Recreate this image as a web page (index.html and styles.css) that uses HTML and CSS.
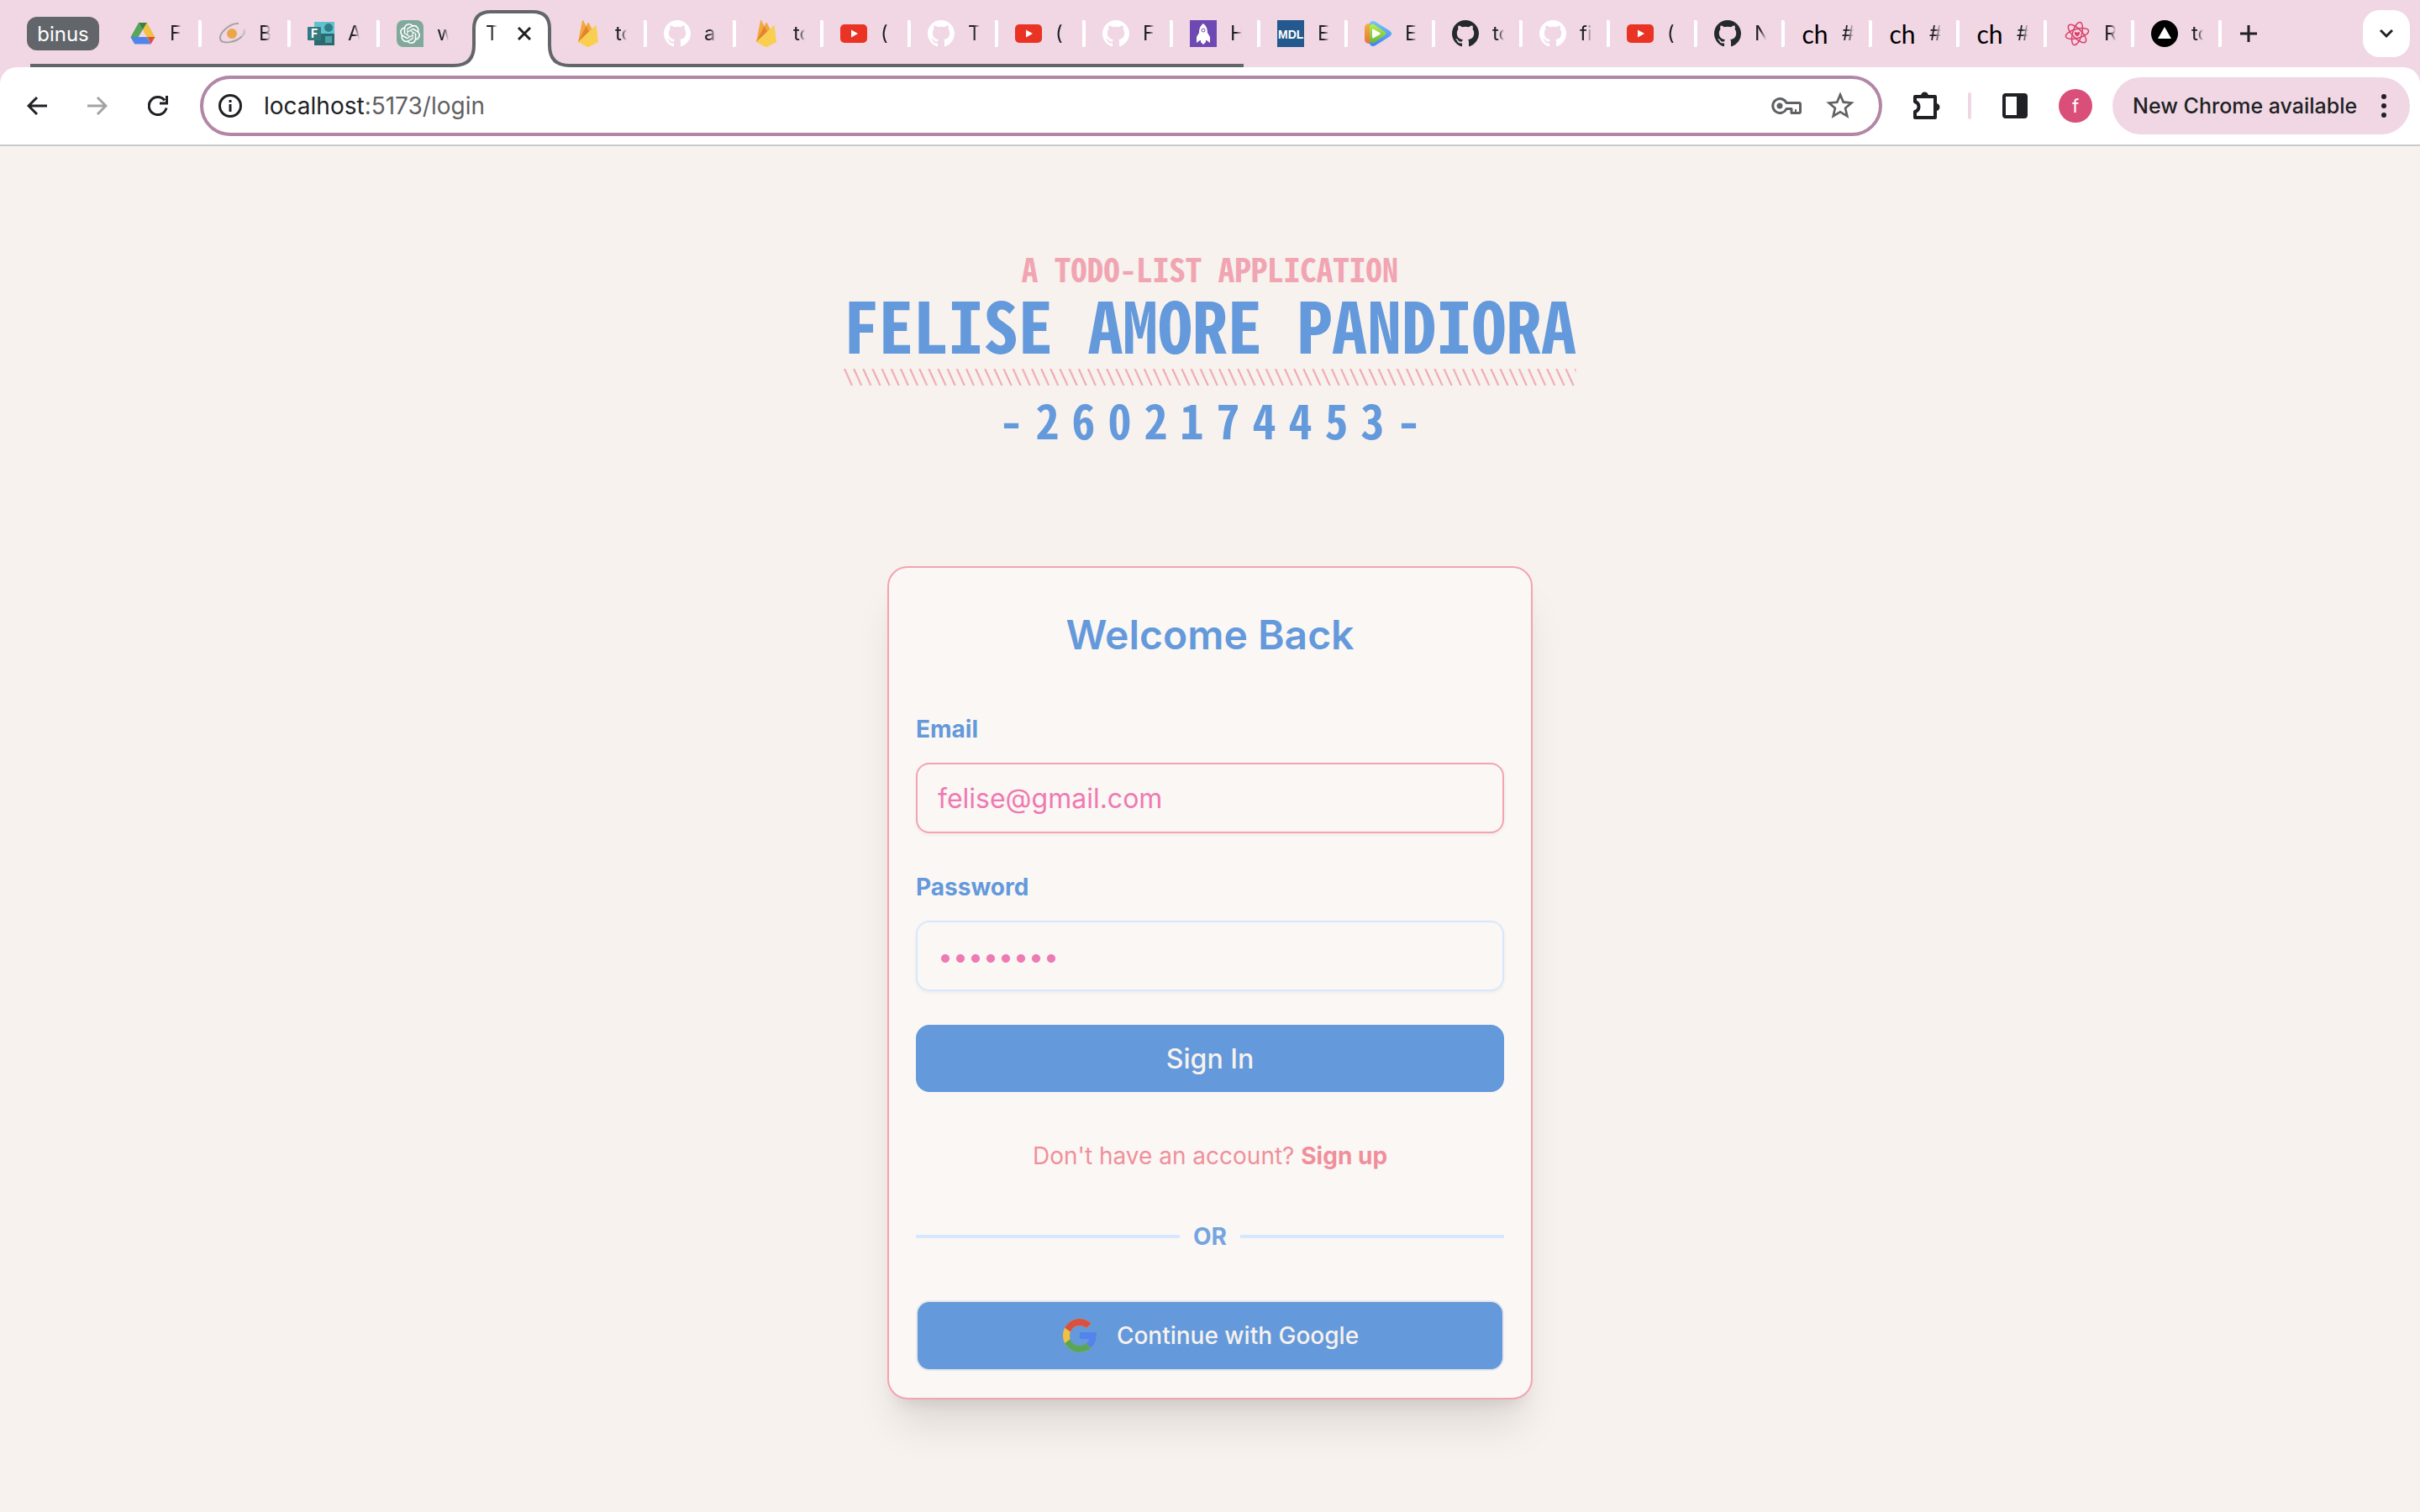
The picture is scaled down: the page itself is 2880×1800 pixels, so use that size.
FILE: index.html
```html
<!DOCTYPE html>
<html lang="en">
<head>
<meta charset="utf-8">
<title>Todo List – Login</title>
<link rel="stylesheet" href="styles.css">
</head>
<body>
<svg class="sprite" aria-hidden="true">
  <symbol id="github" viewBox="0 0 16 16"><path fill="currentColor" d="M8 0C3.58 0 0 3.58 0 8c0 3.54 2.29 6.53 5.47 7.59.4.07.55-.17.55-.38 0-.19-.01-.82-.01-1.49-2.01.37-2.53-.49-2.69-.94-.09-.23-.48-.94-.82-1.13-.28-.15-.68-.52-.01-.53.63-.01 1.08.58 1.23.82.72 1.21 1.87.87 2.33.66.07-.52.28-.87.51-1.07-1.78-.2-3.64-.89-3.64-3.95 0-.87.31-1.59.82-2.15-.08-.2-.36-1.02.08-2.12 0 0 .67-.21 2.2.82.64-.18 1.32-.27 2-.27s1.36.09 2 .27c1.53-1.04 2.2-.82 2.2-.82.44 1.1.16 1.92.08 2.12.51.56.82 1.27.82 2.15 0 3.07-1.87 3.75-3.65 3.95.29.25.54.73.54 1.48 0 1.07-.01 1.93-.01 2.2 0 .21.15.46.55.38A8.01 8.01 0 0 0 16 8c0-4.42-3.58-8-8-8z"/></symbol>
  <symbol id="youtube" viewBox="0 0 32 32"><rect x="0" y="5" width="32" height="22" rx="5" fill="#ea3323"/><path fill="#fff" d="M13 11.500v9l8-4.500z"/></symbol>
  <symbol id="firebase" viewBox="0 0 32 32"><path fill="#f2a83b" d="M4 26 9 .6c.2-.7.8-.7 1.100-.1L13.600 7l2-3.700c.3-.5.9-.5 1.200 0L28 26z"/><path fill="#e28433" d="M4 26 13.600 7l4 7.500z"/><path fill="#f8cf50" d="M4 26 24.500 6.500c.5-.4 1.100-.2 1.200.4L28 26l-11 6c-.7.3-1.300.3-2 0z"/></symbol>
  <symbol id="drive" viewBox="0 0 32 32"><path fill="#58a55c" d="M11 3 1.500 20 6 28l10-17z"/><path fill="#3b8043" d="M11 3h10l-5 8.500z"/><path fill="#f2c042" d="M21 3l9.500 17H20.500L16 11.500z"/><path fill="#5084ec" d="M1.500 20H20.500l5 8.500H6.500z"/><path fill="#d9503f" d="M21 20h9.500l-5 8.500z"/></symbol>
</svg>

<header class="browser">
  <nav class="tabs" aria-label="Tabs">
    <div class="group">
      <button class="chip">binus</button>
      <button class="tab wide"><svg class="fav"><use href="#drive"/></svg><span class="label">F</span></button>
      <button class="tab wide"><svg class="fav" viewBox="0 0 32 32"><g fill="none" stroke="#a5a3a5" stroke-width="2"><path d="M24 4C14 3 1 15 2 22c1 8 20 4 26-3"/><path stroke="#c9c2c6" stroke-width="3" d="M28 19c3-3 4-5 3-8"/></g><circle cx="16" cy="16" r="6" fill="#eca64a"/></svg><span class="label">B</span></button>
      <button class="tab wide"><svg class="fav" viewBox="0 0 32 32"><path fill="#5fc1cc" d="M8 2h24v14H8z"/><path fill="#296a70" d="M8 16h24v14H8z"/><circle cx="25" cy="9" r="5" fill="#2f7e87"/><path fill="#4f9fa6" d="M21 19h8v8h-8z"/><rect y="8" width="16" height="16" rx="1" fill="#35797f"/><text x="4" y="21" class="fav-letter">F</text></svg><span class="label">A</span></button>
      <button class="tab wide"><svg class="fav" viewBox="0 0 32 32"><path fill="#80a99c" d="M8 0h16a8 8 0 0 1 8 8v24H8a8 8 0 0 1-8-8V8a8 8 0 0 1 8-8z"/><path fill="#fff" transform="translate(4 4)" d="M22.2819 9.8211a5.9847 5.9847 0 0 0-.5157-4.9108 6.0462 6.0462 0 0 0-6.5098-2.9A6.0651 6.0651 0 0 0 4.9807 4.1818a5.9847 5.9847 0 0 0-3.9977 2.9 6.0462 6.0462 0 0 0 .7427 7.0966 5.98 5.98 0 0 0 .511 4.9107 6.051 6.051 0 0 0 6.5146 2.9001A5.9847 5.9847 0 0 0 13.2599 24a6.0557 6.0557 0 0 0 5.7718-4.2058 5.9894 5.9894 0 0 0 3.9977-2.9001 6.0557 6.0557 0 0 0-.7475-7.0729zm-9.022 12.6081a4.4755 4.4755 0 0 1-2.8764-1.0408l.1419-.0804 4.7783-2.7582a.7948.7948 0 0 0 .3927-.6813v-6.7369l2.02 1.1686a.071.071 0 0 1 .038.052v5.5826a4.504 4.504 0 0 1-4.4945 4.4944zm-9.6607-4.1254a4.4708 4.4708 0 0 1-.5346-3.0137l.142.0852 4.783 2.7582a.7712.7712 0 0 0 .7806 0l5.8428-3.3685v2.3324a.0804.0804 0 0 1-.0332.0615L9.74 19.9502a4.4992 4.4992 0 0 1-6.1408-1.6464zM2.3408 7.8956a4.485 4.485 0 0 1 2.3655-1.9728V11.6a.7664.7664 0 0 0 .3879.6765l5.8144 3.3543-2.0201 1.1685a.0757.0757 0 0 1-.071 0l-4.8303-2.7865A4.504 4.504 0 0 1 2.3408 7.872zm16.5963 3.8558L13.1038 8.364 15.1192 7.2a.0757.0757 0 0 1 .071 0l4.8303 2.7913a4.4944 4.4944 0 0 1-.6765 8.1042v-5.6772a.79.79 0 0 0-.407-.667zm2.0107-3.0231l-.142-.0852-4.7735-2.7818a.7759.7759 0 0 0-.7854 0L9.409 9.2297V6.8974a.0662.0662 0 0 1 .0284-.0615l4.8303-2.7866a4.4992 4.4992 0 0 1 6.6802 4.66zM8.3065 12.863l-2.02-1.1638a.0804.0804 0 0 1-.038-.0567V6.0742a4.4992 4.4992 0 0 1 7.3757-3.4537l-.142.0805L8.704 5.459a.7948.7948 0 0 0-.3927.6813zm1.0976-2.3654l2.602-1.4998 2.6069 1.4998v2.9994l-2.5974 1.4997-2.6067-1.4997Z"/></svg><span class="label">w</span></button>
      <div class="tab wide active">
        <svg class="shape" viewBox="0 0 138 68" aria-hidden="true"><path fill="#fff" d="M0 66Q24 66 24 42V22Q24 2 44 2H94Q114 2 114 22V42Q114 66 138 66V68H0z"/><path fill="none" stroke="#62666a" stroke-width="4" d="M0 66Q24 66 24 42V22Q24 2 44 2H94Q114 2 114 22V42Q114 66 138 66"/></svg>
        <span class="label">T</span>
        <button class="close" aria-label="Close tab"><svg viewBox="0 0 16 16"><path fill="none" stroke="#202124" stroke-width="3" d="M1 1l14 14M15 1 1 15"/></svg></button>
      </div>
      <button class="tab wide"><svg class="fav"><use href="#firebase"/></svg><span class="label">to</span></button>
      <button class="tab wide"><svg class="fav light"><use href="#github"/></svg><span class="label">a</span></button>
      <button class="tab"><svg class="fav"><use href="#firebase"/></svg><span class="label">to</span></button>
      <button class="tab"><svg class="fav"><use href="#youtube"/></svg><span class="label">(</span></button>
      <button class="tab"><svg class="fav light"><use href="#github"/></svg><span class="label">T</span></button>
      <button class="tab"><svg class="fav"><use href="#youtube"/></svg><span class="label">(</span></button>
      <button class="tab"><svg class="fav light"><use href="#github"/></svg><span class="label">F</span></button>
      <button class="tab"><svg class="fav" viewBox="0 0 32 32"><path fill="#6f49b3" d="M0 0h32v32H0z"/><path fill="#fff" d="M16 4c-4 3-5 7-5 11l-3 5v7l4-3h8l4 3v-7l-3-5c0-4-1-8-5-11zM13 24h6v2l-3 3-3-3z"/><circle cx="16" cy="12" r="2" fill="#fff" stroke="#6f49b3" stroke-width="1"/></svg><span class="label">H</span></button>
    </div>
    <button class="tab"><svg class="fav" viewBox="0 0 32 32"><path fill="#23598f" d="M0 0h32v32H0z"/><text x="1" y="22" class="fav-mdl">MDL</text></svg><span class="label">E</span></button>
    <button class="tab"><svg class="fav" viewBox="0 0 32 32"><defs><linearGradient id="b" x2="0" y2="1"><stop stop-color="#76c4f9"/><stop offset="1" stop-color="#3f82f3"/></linearGradient><linearGradient id="g" x2="0" y2="1"><stop stop-color="#b9f04c"/><stop offset="1" stop-color="#6cb33a"/></linearGradient><linearGradient id="o" x2="0" y2="1"><stop stop-color="#f0b53f"/><stop offset="1" stop-color="#e8743b"/></linearGradient></defs><rect y="4" width="10" height="24" rx="5" fill="url(#o)"/><path fill="url(#b)" d="M6 4c1-3 4-4 7-2l16 10c4 3 4 5 0 8L13 30c-3 2-6 1-7-2z"/><path fill="url(#g)" d="M6 7c1-2 3-3 5-2l12 8c3 2 3 4 0 6l-12 8c-2 1-4 0-5-2z"/><path fill="#fff" d="M9 12c0-1 1-2 2-1l7 4c1 1 1 1 0 2l-7 4c-1 1-2 0-2-1z"/></svg><span class="label">E</span></button>
    <button class="tab"><svg class="fav dark"><use href="#github"/></svg><span class="label">to</span></button>
    <button class="tab"><svg class="fav light"><use href="#github"/></svg><span class="label">fi</span></button>
    <button class="tab"><svg class="fav"><use href="#youtube"/></svg><span class="label">(</span></button>
    <button class="tab"><svg class="fav dark"><use href="#github"/></svg><span class="label">N</span></button>
    <button class="tab"><span class="fav ch">ch</span><span class="label">#</span></button>
    <button class="tab"><span class="fav ch">ch</span><span class="label">#</span></button>
    <button class="tab"><span class="fav ch">ch</span><span class="label">#</span></button>
    <button class="tab"><svg class="fav" viewBox="0 0 32 32"><g fill="none" stroke="#de3f6b" stroke-width="1.500"><ellipse cx="16" cy="16" rx="14" ry="5.500" transform="rotate(-15 16 16)"/><ellipse cx="16" cy="16" rx="14" ry="5.500" transform="rotate(45 16 16)"/><ellipse cx="16" cy="16" rx="14" ry="5.500" transform="rotate(105 16 16)"/></g><path fill="#de3f6b" d="M16 19.500c-5-3-3-6-1.500-5.500l1.500 1 1.500-1c1.500-.5 3.500 2.500-1.500 5.500z"/></svg><span class="label">R</span></button>
    <button class="tab"><svg class="fav" viewBox="0 0 32 32"><circle cx="16" cy="16" r="16"/><path fill="#fff" d="M16 8l8 14H8z"/></svg><span class="label">to</span></button>
    <button class="new-tab" aria-label="New tab"><svg viewBox="0 0 20 20"><path fill="none" stroke="#202124" stroke-width="3" d="M10 0v20M0 10h20"/></svg></button>
    <button class="tab-search" aria-label="Search tabs"><svg viewBox="0 0 16 16"><path fill="none" stroke="#202124" stroke-width="3" d="M1 4l7 7 7-7"/></svg></button>
  </nav>

  <div class="toolbar">
    <button class="tool" aria-label="Back"><svg viewBox="0 0 24 24"><path fill="none" stroke="#202124" stroke-width="3" d="M24 12H3M12 2 2 12l10 10"/></svg></button>
    <button class="tool" aria-label="Forward"><svg viewBox="0 0 24 24"><path fill="none" stroke="#a3a3a4" stroke-width="3" d="M0 12h21M12 2l10 10-10 10"/></svg></button>
    <button class="tool" aria-label="Reload"><svg viewBox="0 0 24 24"><path fill="none" stroke="#202124" stroke-width="3" d="M22 14.500A10.500 10.500 0 1 1 20 5.500"/><path fill="none" stroke="#202124" stroke-width="3" d="M22.500 0v9H14"/></svg></button>
    <form class="omnibox">
      <svg class="info" viewBox="0 0 28 28" aria-hidden="true"><circle cx="14" cy="14" r="12.500" fill="none" stroke="#202124" stroke-width="3"/><path fill="#202124" d="M12.500 12h3v9h-3zM12.500 7h3v3h-3z"/></svg>
      <a class="url" href="#"><b>localhost</b>:5173/login</a>
      <svg class="key" viewBox="0 0 36 20" aria-hidden="true"><path fill="none" stroke="#5f6163" stroke-width="3" stroke-linejoin="round" d="M18 6.500h15a1.500 1.500 0 0 1 1.500 1.500v9a1.500 1.500 0 0 1-1.500 1.500h-9V13.500H18a8.500 8.500 0 1 1 0-7z"/><circle cx="10" cy="10" r="3.500" fill="#5f6163"/><path fill="#5f6163" d="M28 14h2v4h-2z"/></svg>
      <svg class="star" viewBox="0 0 24 24" aria-hidden="true"><path fill="#5f6163" d="M22 9.240l-7.190-.62L12 2 9.190 8.630 2 9.240l5.460 4.730L5.820 21 12 17.270 18.180 21l-1.630-7.030L22 9.240zM12 15.400l-3.760 2.270 1-4.280-3.320-2.880 4.380-.38L12 6.100l1.710 4.040 4.380.38-3.320 2.880 1 4.280L12 15.400z"/></svg>
    </form>
    <button class="tool ext" aria-label="Extensions"><svg viewBox="0 0 34 34"><path fill="none" stroke="#202124" stroke-width="4" stroke-linejoin="round" d="M3 6h24v25H3v-7c6-2 6-10 0-12z"/><path fill="#202124" d="M10 5a4.500 4.500 0 0 1 9 0zM28 14a4.500 4.500 0 0 1 0 9z"/></svg></button>
    <span class="divider"></span>
    <button class="tool panel" aria-label="Side panel"><svg viewBox="0 0 30 30"><rect x="2" y="2" width="26" height="26" rx="2" fill="#fff" stroke="#202124" stroke-width="4"/><path fill="#202124" d="M17 2h11v26H17z"/></svg></button>
    <button class="avatar">f</button>
    <button class="update">New Chrome available<svg viewBox="0 0 6 30" aria-hidden="true"><g fill="#202124"><circle cx="3" cy="4" r="3"/><circle cx="3" cy="15" r="3"/><circle cx="3" cy="26" r="3"/></g></svg></button>
  </div>
</header>

<main class="page">
  <div class="banner">
    <p class="kicker">A TODO-LIST APPLICATION</p>
    <h1 class="name">FELISE AMORE PANDIORA</h1>
    <svg class="hatch" aria-hidden="true"><defs><pattern id="slash" width="11.150" height="20" patternUnits="userSpaceOnUse"><path stroke="#f1a4b2" stroke-width="2" d="M1 0l9 20"/></pattern></defs><rect width="100%" height="20" fill="url(#slash)"/></svg>
    <p class="number">-2602174453-</p>
  </div>

  <section class="card">
    <h2 class="heading">Welcome Back</h2>
    <form class="form">
      <label class="field-label" for="email">Email</label>
      <input class="field focused" id="email" type="email" value="felise@gmail.com">
      <label class="field-label" for="password">Password</label>
      <input class="field" id="password" type="password" value="password">
      <button class="submit" type="button">Sign In</button>
    </form>
    <p class="signup">Don't have an account? <a href="#">Sign up</a></p>
    <div class="or">OR</div>
    <button class="google"><svg viewBox="2 2 44 44" aria-hidden="true"><path fill="#f0c043" d="M43.611 20.083H42V20H24v8h11.303c-1.649 4.657-6.080 8-11.303 8-6.627 0-12-5.373-12-12s5.373-12 12-12c3.059 0 5.842 1.154 7.961 3.039l5.657-5.657C34.046 6.053 29.268 4 24 4 12.955 4 4 12.955 4 24s8.955 20 20 20 20-8.955 20-20c0-1.341-.138-2.650-.389-3.917z"/><path fill="#d95140" d="M6.306 14.691l6.571 4.819C14.655 15.108 18.961 12 24 12c3.059 0 5.842 1.154 7.961 3.039l5.657-5.657C34.046 6.053 29.268 4 24 4 16.318 4 9.656 8.337 6.306 14.691z"/><path fill="#58a55c" d="M24 44c5.166 0 9.860-1.977 13.409-5.192l-6.190-5.238A11.910 11.910 0 0 1 24 36c-5.202 0-9.619-3.317-11.283-7.946l-6.522 5.025C9.505 39.556 16.227 44 24 44z"/><path fill="#5383ec" d="M43.611 20.083H42V20H24v8h11.303a12.040 12.040 0 0 1-4.087 5.571l6.193 5.238C36.971 39.205 44 34 44 24c0-1.341-.138-2.650-.389-3.917z"/></svg>Continue with Google</button>
  </section>
</main>
</body>
</html>
```
FILE: styles.css
```css
* { box-sizing: border-box; }
body {
  margin: 0;
  min-height: 100vh;
  background: #f7f2ee;
  color: #202124;
  font-family: Inter, "Liberation Sans", sans-serif;
}
button {
  padding: 0;
  border: 0;
  background: none;
  color: inherit;
  font: inherit;
  cursor: pointer;
}
h1, h2, p { margin: 0; }
svg { display: block; flex: none; }
.sprite { position: absolute; width: 0; height: 0; }

/* Browser chrome */
.browser { background: #f0d7e3; }
.tabs {
  display: flex;
  align-items: center;
  height: 80px;
  padding: 0 12px 0 32px;
  font-size: 24px;
}
.group {
  display: flex;
  align-items: center;
  height: 80px;
  background: linear-gradient(#62666a, #62666a) 4px 100% / calc(100% - 24px) 4px no-repeat;
}
.chip {
  width: 86px;
  height: 40px;
  margin-right: 16px;
  border-radius: 12px;
  background: #62666a;
  color: #fff;
}
.tab {
  position: relative;
  display: flex;
  align-items: center;
  gap: 16px;
  width: 104px;
  height: 32px;
  padding-left: 20px;
  border-right: 4px solid #fff;
  border-radius: 2px;
}
.tab.wide { width: 106px; }
.tab.active { border-color: transparent; gap: 24px; }
.tab:has(+ .active) { border-color: transparent; }
.fav { width: 32px; height: 32px; flex: none; }
.fav.light { color: #fff; }
.fav.dark { color: #24292e; }
.ch { font: 30px/32px Lato, sans-serif; color: #000; }
.fav-letter { font: 700 14px Inter, sans-serif; fill: #fff; }
.fav-mdl { font: 700 14px "Liberation Sans", sans-serif; fill: #fff; }
.label {
  position: relative;
  width: 14px;
  overflow: hidden;
  white-space: nowrap;
  text-align: left;
  line-height: 32px;
  mask-image: linear-gradient(90deg, #000 50%, transparent);
}
.shape {
  position: absolute;
  left: -18px;
  top: -12px;
  width: 138px;
  height: 68px;
}
.close { position: relative; }
.close svg { width: 16px; height: 16px; }
.new-tab { display: grid; place-items: center; width: 64px; height: 56px; }
.new-tab svg { width: 20px; height: 20px; }
.tab-search {
  display: grid;
  place-items: center;
  width: 56px;
  height: 56px;
  margin-left: auto;
  border-radius: 20px;
  background: #fff;
}
.tab-search svg { width: 16px; height: 16px; }

.toolbar {
  display: flex;
  align-items: center;
  height: 94px;
  padding: 0 12px 0 8px;
  border-bottom: 2px solid #c9cacb;
  border-radius: 20px 20px 0 0;
  background: #fff;
}
.tool { display: grid; place-items: center; width: 72px; height: 72px; }
.tool svg { width: 24px; height: 24px; }
.omnibox {
  display: flex;
  align-items: center;
  flex: 1;
  height: 72px;
  margin-left: 14px;
  padding: 0 26px 0 18px;
  border: 4px solid #b287a6;
  border-radius: 36px;
}
.info { width: 28px; height: 28px; }
.url {
  flex: 1;
  padding-left: 26px;
  color: #5f6163;
  font-size: 28px;
  text-decoration: none;
}
.url b { color: #202124; font-weight: 400; }
.key { width: 36px; height: 20px; }
.star { width: 40px; height: 40px; margin-left: 26px; }
.tool.ext { width: 102px; padding-left: 4px; }
.tool.ext svg { width: 34px; height: 34px; }
.divider { width: 4px; height: 32px; border-radius: 2px; background: #f0d7e3; }
.tool.panel { width: 104px; }
.tool.panel svg { width: 30px; height: 30px; }
.avatar {
  width: 40px;
  height: 40px;
  margin-right: 24px;
  border-radius: 50%;
  background: #da4f7a;
  color: #fff;
  font-size: 22px;
}
.update {
  display: flex;
  align-items: center;
  justify-content: space-between;
  width: 354px;
  height: 68px;
  padding: 0 28px 0 24px;
  border-radius: 34px;
  background: #f0d7e3;
  font-size: 25px;
  font-weight: 500;
}
.update svg { width: 6px; height: 30px; }

/* Login page */
.page {
  display: flex;
  flex-direction: column;
  align-items: center;
  gap: 143px;
  padding: 125px 24px 134px;
}
.banner {
  display: flex;
  flex-direction: column;
  align-items: center;
  color: #6499db;
  font-family: "Noto Sans Mono CJK SC", "Liberation Mono", monospace;
  font-weight: 700;
}
.kicker { color: #f1a4b2; font-size: 39px; line-height: 40px; }
.name { font-size: 83px; line-height: 92px; }
.hatch { width: 100%; height: 20px; margin: 8px 0; }
.number { font-size: 56px; line-height: 64px; letter-spacing: 15px; padding-left: 15px; }

.card {
  width: 100%;
  max-width: 768px;
  padding: 48px 32px 32px;
  border: 2px solid #f4a3b0;
  border-radius: 24px;
  background: #fbf7f4;
  box-shadow: 0 40px 50px -10px rgba(0, 0, 0, .1), 0 16px 20px -12px rgba(0, 0, 0, .1);
}
.heading {
  margin-bottom: 60px;
  color: #6499db;
  font-size: 48px;
  font-weight: 600;
  line-height: 64px;
  text-align: center;
}
.form { display: flex; flex-direction: column; }
.field-label {
  margin-bottom: 20px;
  color: #6499db;
  font-size: 28px;
  font-weight: 700;
  line-height: 40px;
}
.field {
  width: 100%;
  height: 84px;
  margin-bottom: 44px;
  padding: 0 24px;
  border: 2px solid #d6e8fd;
  border-radius: 16px;
  background: transparent;
  box-shadow: 0 2px 4px rgba(0, 0, 0, .05);
  color: #ee7ab3;
  font: 32px Inter, sans-serif;
}
.field.focused { border-color: #f4a3b0; }
#password { margin-bottom: 40px; }
.submit, .google {
  width: 100%;
  border-radius: 16px;
  background: #6499db;
  color: #f7f2ee;
  font-weight: 500;
}
.submit { height: 80px; font-size: 32px; }
.signup {
  margin: 56px 0;
  color: #f08f9b;
  font-size: 28px;
  line-height: 40px;
  text-align: center;
}
.signup a { color: inherit; font-weight: 700; text-decoration: none; }
.or {
  display: flex;
  align-items: center;
  gap: 16px;
  margin-bottom: 56px;
  color: #74a5e0;
  font-size: 28px;
  font-weight: 700;
  line-height: 40px;
}
.or::before, .or::after {
  content: "";
  flex: 1;
  height: 4px;
  background: #d6e8fd;
}
.google {
  display: flex;
  align-items: center;
  justify-content: center;
  gap: 22px;
  height: 84px;
  border: 2px solid #e5e7eb;
  font-size: 28px;
}
.google svg { width: 44px; height: 44px; }
```
